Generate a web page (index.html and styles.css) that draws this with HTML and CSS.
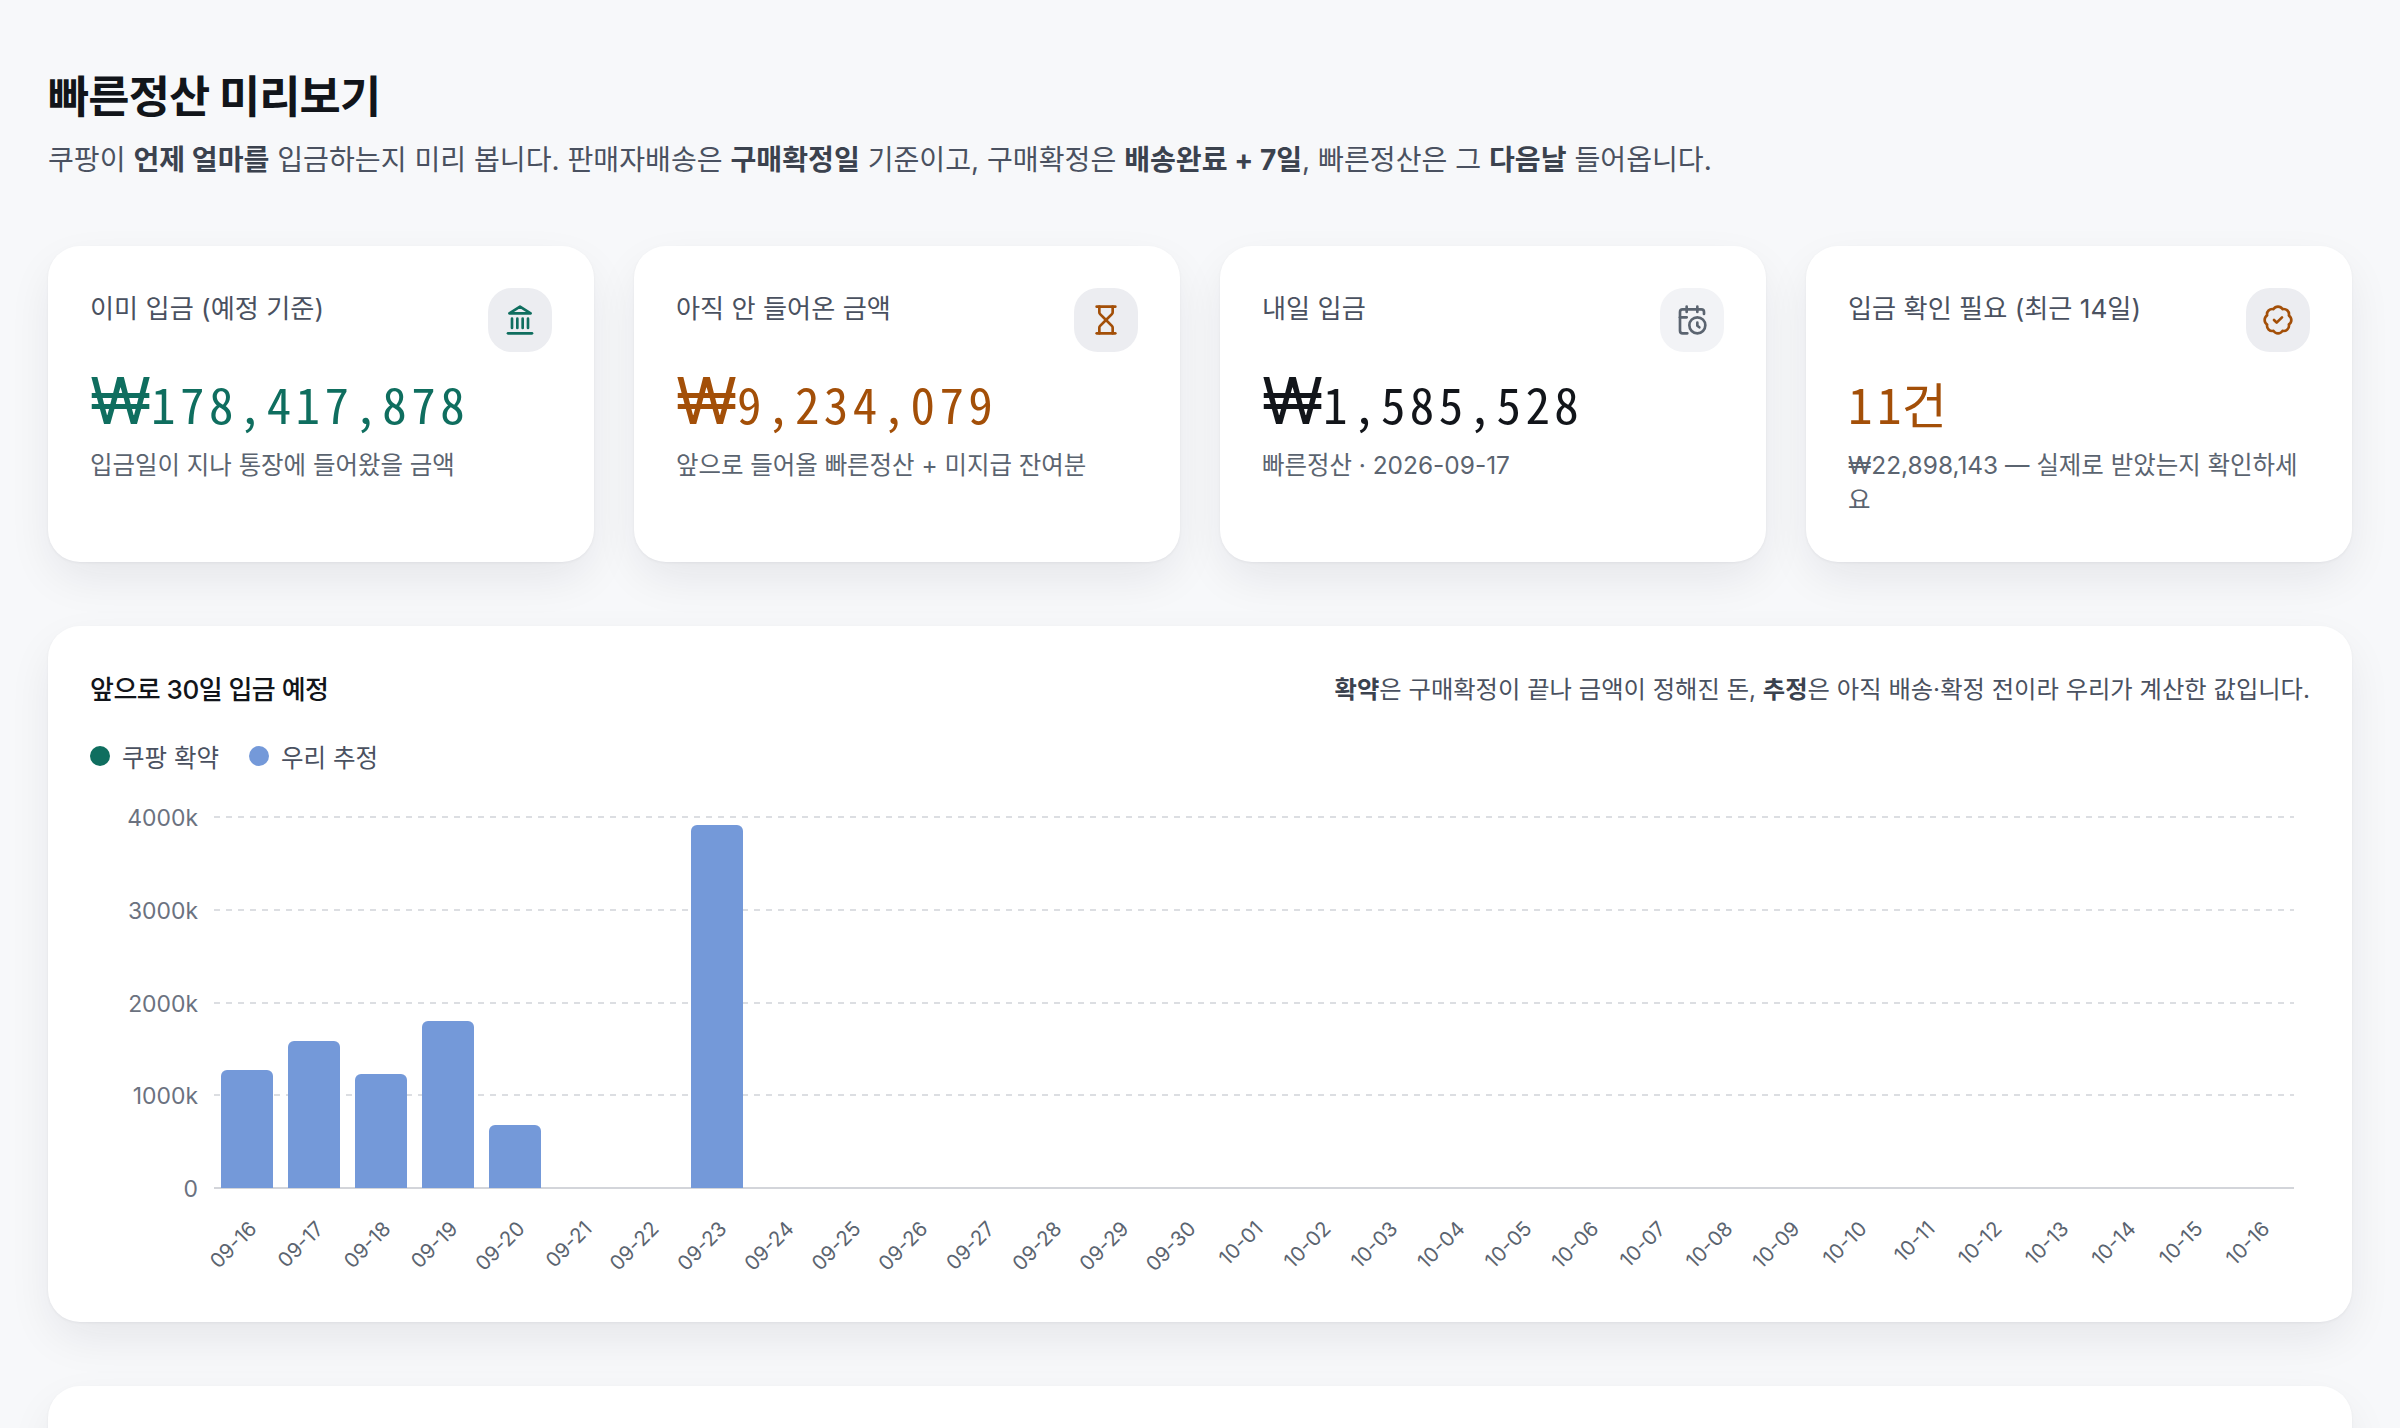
FILE: index.html
```html
<!DOCTYPE html>
<html lang="ko">
<head>
<meta charset="utf-8">
<title>빠른정산 미리보기</title>
<link rel="stylesheet" href="styles.css">
</head>
<body>
<main class="page">
  <header class="head">
    <h1 class="title">빠른정산 미리보기</h1>
    <p class="lead">쿠팡이 <b>언제 얼마를</b> 입금하는지 미리 봅니다. 판매자배송은 <b>구매확정일</b> 기준이고, 구매확정은 <b>배송완료 + 7일</b>, 빠른정산은 그 <b>다음날</b> 들어옵니다.</p>
  </header>
  <section class="kpis">
    <article class="card kpi">
      <div class="kpi-top">
        <span class="kpi-label">이미 입금 (예정 기준)</span>
        <span class="tile teal"><svg class="ico" viewBox="0 0 24 24"><line x1="3" x2="21" y1="22" y2="22"/><line x1="6" x2="6" y1="18" y2="11"/><line x1="10" x2="10" y1="18" y2="11"/><line x1="14" x2="14" y1="18" y2="11"/><line x1="18" x2="18" y1="18" y2="11"/><polygon points="12 2 20 7 4 7"/></svg></span>
      </div>
      <div class="kpi-value teal"><span class="won">₩</span>178,417,878</div>
      <div class="kpi-sub">입금일이 지나 통장에 들어왔을 금액</div>
    </article>
    <article class="card kpi">
      <div class="kpi-top">
        <span class="kpi-label">아직 안 들어온 금액</span>
        <span class="tile amber"><svg class="ico" viewBox="0 0 24 24"><path d="M5 22h14"/><path d="M5 2h14"/><path d="M17 22v-4.172a2 2 0 0 0-.586-1.414L12 12l-4.414 4.414A2 2 0 0 0 7 17.828V22"/><path d="M7 2v4.172a2 2 0 0 0 .586 1.414L12 12l4.414-4.414A2 2 0 0 0 17 6.172V2"/></svg></span>
      </div>
      <div class="kpi-value amber"><span class="won">₩</span>9,234,079</div>
      <div class="kpi-sub">앞으로 들어올 빠른정산 + 미지급 잔여분</div>
    </article>
    <article class="card kpi">
      <div class="kpi-top">
        <span class="kpi-label">내일 입금</span>
        <span class="tile gray"><svg class="ico" viewBox="0 0 24 24"><path d="M21 7.5V6a2 2 0 0 0-2-2H5a2 2 0 0 0-2 2v14a2 2 0 0 0 2 2h3.5"/><path d="M16 2v4"/><path d="M8 2v4"/><path d="M3 10h5"/><path d="M17.5 17.5 16 16.3V14"/><circle cx="16" cy="16" r="6"/></svg></span>
      </div>
      <div class="kpi-value"><span class="won">₩</span>1,585,528</div>
      <div class="kpi-sub">빠른정산 · 2026-09-17</div>
    </article>
    <article class="card kpi">
      <div class="kpi-top">
        <span class="kpi-label">입금 확인 필요 (최근 14일)</span>
        <span class="tile amber"><svg class="ico" viewBox="0 0 24 24"><path d="M3.85 8.62a4 4 0 0 1 4.78-4.77 4 4 0 0 1 6.74 0 4 4 0 0 1 4.78 4.78 4 4 0 0 1 0 6.74 4 4 0 0 1-4.77 4.78 4 4 0 0 1-6.75 0 4 4 0 0 1-4.78-4.77 4 4 0 0 1 0-6.76Z"/><path d="m9 12 2 2 4-4"/></svg></span>
      </div>
      <div class="kpi-value amber">11<span class="unit">건</span></div>
      <div class="kpi-sub">₩22,898,143 — 실제로 받았는지 확인하세요</div>
    </article>
  </section>
  <section class="card chart-card">
    <div class="chart-head">
      <h2 class="chart-title">앞으로 30일 입금 예정</h2>
      <p class="chart-note"><b>확약</b>은 구매확정이 끝나 금액이 정해진 돈, <b>추정</b>은 아직 배송·확정 전이라 우리가 계산한 값입니다.</p>
    </div>
    <div class="legend">
      <span class="legend-item"><i class="dot dot-teal"></i>쿠팡 확약</span>
      <span class="legend-item"><i class="dot dot-blue"></i>우리 추정</span>
    </div>
    <svg class="chart" viewBox="0 0 2220 490" width="2220" height="490">
      <g class="grid">
        <line x1="124" x2="2204" y1="26" y2="26"/>
        <line x1="124" x2="2204" y1="119" y2="119"/>
        <line x1="124" x2="2204" y1="212" y2="212"/>
        <line x1="124" x2="2204" y1="304" y2="304"/>
      </g>
      <line class="axis" x1="124" x2="2204" y1="397" y2="397"/>
      <g class="yt">
        <text x="108" y="35">4000k</text>
        <text x="108" y="128">3000k</text>
        <text x="108" y="221">2000k</text>
        <text x="108" y="313">1000k</text>
        <text x="108" y="406">0</text>
      </g>
      <g class="bars">
        <path d="M131 397V285a6 6 0 0 1 6-6h40a6 6 0 0 1 6 6V397Z"/>
        <path d="M198 397V256a6 6 0 0 1 6-6h40a6 6 0 0 1 6 6V397Z"/>
        <path d="M265 397V289a6 6 0 0 1 6-6h40a6 6 0 0 1 6 6V397Z"/>
        <path d="M332 397V236a6 6 0 0 1 6-6h40a6 6 0 0 1 6 6V397Z"/>
        <path d="M399 397V340a6 6 0 0 1 6-6h40a6 6 0 0 1 6 6V397Z"/>
        <path d="M601 397V40a6 6 0 0 1 6-6h40a6 6 0 0 1 6 6V397Z"/>
      </g>
      <g class="xt">
        <text transform="translate(168 439) rotate(-45)">09-16</text>
        <text transform="translate(235 439) rotate(-45)">09-17</text>
        <text transform="translate(302 439) rotate(-45)">09-18</text>
        <text transform="translate(369 439) rotate(-45)">09-19</text>
        <text transform="translate(436 439) rotate(-45)">09-20</text>
        <text transform="translate(503 439) rotate(-45)">09-21</text>
        <text transform="translate(570 439) rotate(-45)">09-22</text>
        <text transform="translate(638 439) rotate(-45)">09-23</text>
        <text transform="translate(705 439) rotate(-45)">09-24</text>
        <text transform="translate(772 439) rotate(-45)">09-25</text>
        <text transform="translate(839 439) rotate(-45)">09-26</text>
        <text transform="translate(906 439) rotate(-45)">09-27</text>
        <text transform="translate(973 439) rotate(-45)">09-28</text>
        <text transform="translate(1040 439) rotate(-45)">09-29</text>
        <text transform="translate(1107 439) rotate(-45)">09-30</text>
        <text transform="translate(1174 439) rotate(-45)">10-01</text>
        <text transform="translate(1242 439) rotate(-45)">10-02</text>
        <text transform="translate(1309 439) rotate(-45)">10-03</text>
        <text transform="translate(1376 439) rotate(-45)">10-04</text>
        <text transform="translate(1443 439) rotate(-45)">10-05</text>
        <text transform="translate(1510 439) rotate(-45)">10-06</text>
        <text transform="translate(1577 439) rotate(-45)">10-07</text>
        <text transform="translate(1644 439) rotate(-45)">10-08</text>
        <text transform="translate(1711 439) rotate(-45)">10-09</text>
        <text transform="translate(1778 439) rotate(-45)">10-10</text>
        <text transform="translate(1846 439) rotate(-45)">10-11</text>
        <text transform="translate(1913 439) rotate(-45)">10-12</text>
        <text transform="translate(1980 439) rotate(-45)">10-13</text>
        <text transform="translate(2047 439) rotate(-45)">10-14</text>
        <text transform="translate(2114 439) rotate(-45)">10-15</text>
        <text transform="translate(2181 439) rotate(-45)">10-16</text>
      </g>
    </svg>
  </section>
  <section class="card next-card"></section>
</main>
</body>
</html>
```
FILE: styles.css
```css
* { box-sizing: border-box; }
html, body { margin: 0; padding: 0; }
body {
  background: #f7f8fa;
  color: #12151a;
  font-family: Inter, "Noto Sans CJK JP", sans-serif;
  height: 1428px;
  overflow: hidden;
}
.page { padding: 66px 48px 0; display: flex; flex-direction: column; }
.head { margin-bottom: 66px; }
.title { margin: 0 0 12px; font-size: 44.8px; line-height: 62px; font-weight: 700; letter-spacing: -0.02em; }
.lead { margin: 0; font-size: 28.1px; line-height: 40px; color: #4a5160; }
.lead b, .chart-note b { font-weight: 700; color: #3b424e; }
.card {
  background: #fff;
  border-radius: 32px;
  box-shadow: 0 1px 3px rgba(20, 24, 40, .05), 0 18px 48px -6px rgba(20, 24, 40, .09);
}
.kpis { display: grid; grid-template-columns: repeat(4, 1fr); gap: 40px; margin-bottom: 64px; }
.kpi { padding: 42px; height: 316px; }
.kpi-top { display: flex; justify-content: space-between; align-items: flex-start; height: 64px; }
.kpi-label { font-size: 26.2px; line-height: 42px; color: #4a5160; }
.tile { width: 64px; height: 64px; border-radius: 24px; background: #ecedf1; display: flex; align-items: center; justify-content: center; flex: none; }
.ico { width: 32px; height: 32px; fill: none; stroke: currentColor; stroke-width: 2; stroke-linecap: round; stroke-linejoin: round; }
.teal { color: #0f6e5f; }
.amber { color: #a34f08; }
.gray { color: #5b6470; background: #f2f3f6; }
.kpi-value { margin-top: 21px; font-family: "Noto Sans Mono CJK KR", monospace; font-size: 49px; line-height: 60px; font-weight: 400; letter-spacing: .09em; }
.won { font-family: Inter, sans-serif; font-size: 64px; line-height: 0; letter-spacing: 0; }
.unit { font-family: "Noto Sans CJK JP", sans-serif; line-height: 0; letter-spacing: 0; margin-left: -4px; }
.kpi-sub { margin-top: 15px; font-size: 24.45px; line-height: 35px; color: #5b6470; }
.chart-card { padding: 42px; height: 696px; margin-bottom: 64px; }
.chart-head { display: flex; justify-content: space-between; align-items: center; height: 38px; }
.chart-title { margin: 0; font-size: 26px; font-weight: 500; letter-spacing: -0.02em; color: #12151a; }
.chart-note { margin: 0; font-size: 24.32px; color: #4a5160; }
.legend { display: flex; gap: 30px; margin-top: 32px; height: 36px; align-items: center; }
.legend-item { display: flex; align-items: center; gap: 12px; font-size: 24.5px; color: #4a5160; }
.dot { width: 20px; height: 20px; border-radius: 50%; }
.dot-teal { background: #0f6e5f; }
.dot-blue { background: #7499d9; }
.chart { display: block; margin-top: 17px; }
.grid line { stroke: #dcdee2; stroke-width: 2; stroke-dasharray: 6 6; }
.axis { stroke: #d3d5da; stroke-width: 2; }
.bars path { fill: #7499d9; }
.yt text { font-size: 22.9px; fill: #6b7280; text-anchor: end; }
.xt text { font-size: 20.4px; fill: #5b6470; text-anchor: end; }
.next-card { height: 300px; }
```
